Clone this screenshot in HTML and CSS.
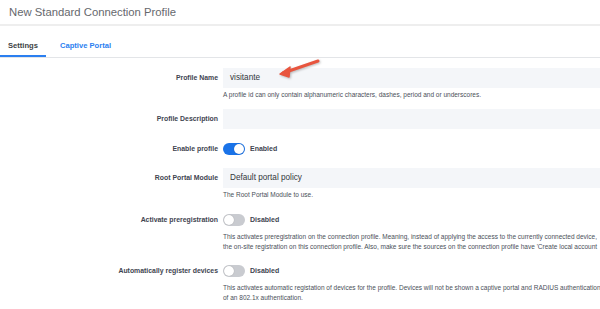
FILE: index.html
```html
<!DOCTYPE html>
<html lang="en">
<head>
    <meta charset="UTF-8">
    <title>New Standard Connection Profile</title>
    <link rel="stylesheet" href="styles.css">
</head>
<body>
    <div class="page">
        <header class="page-header">
            <h1>New Standard Connection Profile</h1>
        </header>

        <nav class="tabs">
            <a class="tab active">Settings</a>
            <a class="tab">Captive Portal</a>
        </nav>

        <form class="profile-form">
            <div class="field">
                <label class="field-label">Profile Name</label>
                <div class="field-body">
                    <div class="input">visitante</div>
                    <p class="help">A profile id can only contain alphanumeric characters, dashes, period and or underscores.</p>
                </div>
            </div>

            <div class="field">
                <label class="field-label">Profile Description</label>
                <div class="field-body">
                    <div class="input"></div>
                </div>
            </div>

            <div class="field">
                <label class="field-label">Enable profile</label>
                <div class="field-body">
                    <div class="switch-row">
                        <span class="switch on"><span class="knob"></span></span>
                        <span class="switch-text">Enabled</span>
                    </div>
                </div>
            </div>

            <div class="field">
                <label class="field-label">Root Portal Module</label>
                <div class="field-body">
                    <div class="input">Default portal policy</div>
                    <p class="help">The Root Portal Module to use.</p>
                </div>
            </div>

            <div class="field">
                <label class="field-label">Activate preregistration</label>
                <div class="field-body">
                    <div class="switch-row">
                        <span class="switch"><span class="knob"></span></span>
                        <span class="switch-text">Disabled</span>
                    </div>
                    <p class="help">This activates preregistration on the connection profile. Meaning, instead of applying the access to the currently connected device,<br>the on-site registration on this connection profile. Also, make sure the sources on the connection profile have 'Create local account</p>
                </div>
            </div>

            <div class="field">
                <label class="field-label">Automatically register devices</label>
                <div class="field-body">
                    <div class="switch-row">
                        <span class="switch"><span class="knob"></span></span>
                        <span class="switch-text">Disabled</span>
                    </div>
                    <p class="help">This activates automatic registation of devices for the profile. Devices will not be shown a captive portal and RADIUS authentication<br>of an 802.1x authentication.</p>
                </div>
            </div>
        </form>

        <!-- annotation arrow drawn over the screenshot -->
        <svg class="arrow" width="60" height="30" viewBox="0 0 60 30">
            <line x1="47" y1="6" x2="12" y2="18" stroke="#e8553e" stroke-width="3" stroke-linecap="round"/>
            <path d="M9 19 L19 12 L18 22 Z" fill="#e8553e" stroke="#e8553e" stroke-width="1.5" stroke-linejoin="round"/>
        </svg>
    </div>
</body>
</html>
```

FILE: styles.css
```css
body {
    margin: 0;
    font-family: "Liberation Sans", Arial, sans-serif;
    background: #fff;
    color: #333;
    overflow: hidden;
}

.page {
    position: relative;
    width: 600px;
    height: 309px;
    overflow: hidden;
}

.page-header {
    height: 24px;
    border-bottom: 2px solid #eeeeee;
    padding-left: 9px;
}

.page-header h1 {
    margin: 0;
    font-size: 11.3px;
    font-weight: normal;
    line-height: 24px;
    color: #66686d;
}

.tabs {
    display: flex;
    height: 31px;
    border-bottom: 1px solid #e3e5e8;
}

.tab {
    padding: 10px 8px 0;
    margin-right: 6px;
    font-size: 7.6px;
    font-weight: bold;
    line-height: 19px;
    color: #2b7ff0;
    border-bottom: 2px solid transparent;
}

.tab.active {
    color: #3c3f44;
    border-bottom-color: #2b7ff0;
}

.profile-form {
    padding-top: 10px;
}

.field {
    display: grid;
    grid-template-columns: 218px 1fr;
    column-gap: 5px;
    margin-bottom: 9.4px;
}

.field-label {
    text-align: right;
    font-size: 6.9px;
    font-weight: bold;
    color: #3e4450;
    line-height: 20px;
    white-space: nowrap;
}

.field-body {
    min-width: 0;
}

.input {
    height: 20px;
    line-height: 20px;
    padding-left: 7px;
    background: #f4f6f9;
    font-size: 8.2px;
    color: #33363b;
}

.help {
    margin: 2px 0 0;
    font-size: 6.5px;
    line-height: 10px;
    color: #4a4f59;
    white-space: nowrap;
}

.switch-row {
    display: flex;
    align-items: center;
    height: 20px;
    gap: 5px;
}

.switch {
    position: relative;
    width: 22px;
    height: 12px;
    border-radius: 6px;
    background: #c9cbd0;
}

.switch .knob {
    position: absolute;
    top: 1px;
    left: 1px;
    width: 10px;
    height: 10px;
    border-radius: 50%;
    background: #fff;
    box-shadow: 0 0 1px rgba(0, 0, 0, 0.3);
}

.switch.on {
    background: #1a73e8;
}

.switch.on .knob {
    left: 11px;
}

.switch-text {
    font-size: 7px;
    font-weight: bold;
    color: #3e4450;
}

.arrow {
    position: absolute;
    left: 271px;
    top: 55px;
    filter: drop-shadow(1px 1px 1px rgba(0, 0, 0, 0.25));
}
```
